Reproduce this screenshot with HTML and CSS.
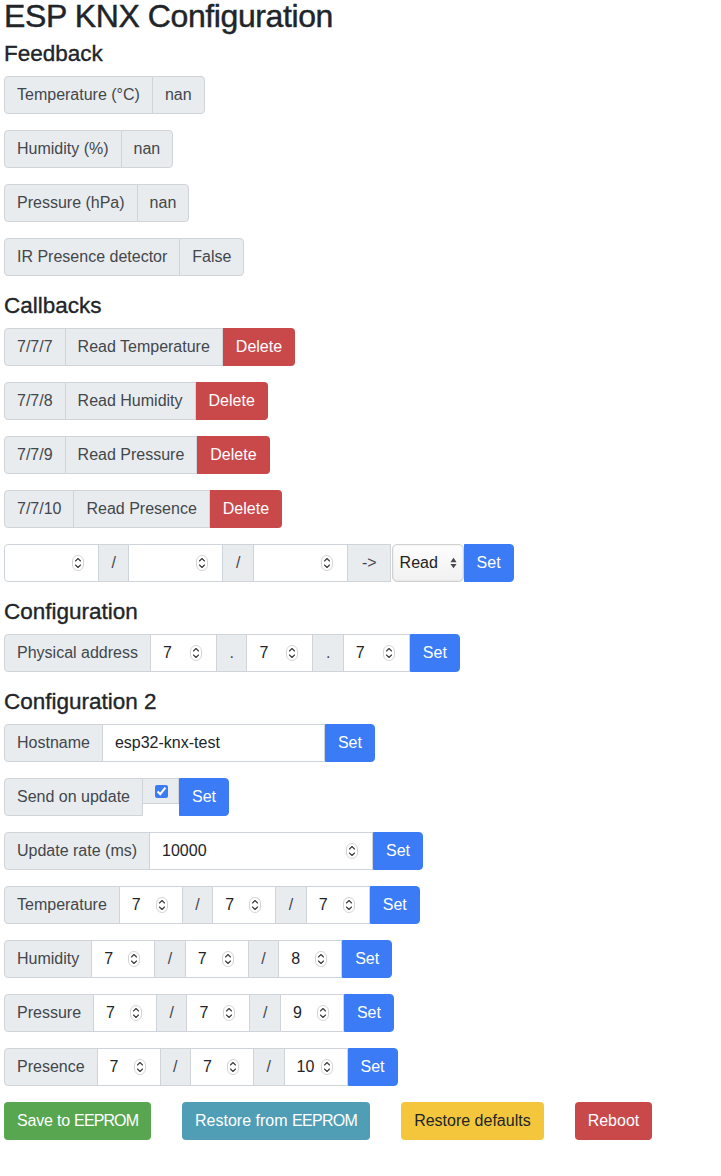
FILE: index.html
```html
<!DOCTYPE html>
<html lang="en">
<head>
<meta charset="utf-8">
<title>ESP KNX Configuration</title>
<link rel="stylesheet" href="styles.css">
</head>
<body>
<h1 class="title">ESP KNX Configuration</h1>

<h2 class="sec">Feedback</h2>
<div class="ig"><span class="t">Temperature (°C)</span><span class="t">nan</span></div>
<div class="ig"><span class="t">Humidity (%)</span><span class="t">nan</span></div>
<div class="ig"><span class="t">Pressure (hPa)</span><span class="t">nan</span></div>
<div class="ig"><span class="t">IR Presence detector</span><span class="t">False</span></div>

<h2 class="sec">Callbacks</h2>
<div class="ig"><span class="t">7/7/7</span><span class="t">Read Temperature</span><button class="btn red">Delete</button></div>
<div class="ig"><span class="t">7/7/8</span><span class="t">Read Humidity</span><button class="btn red">Delete</button></div>
<div class="ig"><span class="t">7/7/9</span><span class="t">Read Pressure</span><button class="btn red">Delete</button></div>
<div class="ig"><span class="t">7/7/10</span><span class="t">Read Presence</span><button class="btn red">Delete</button></div>
<div class="ig">
  <span class="num w95"><input type="text" value=""><svg class="spin" viewBox="0 0 12 16"><rect x="0.5" y="0.5" width="11" height="15" rx="5.5"/><path d="M3.5 6 L6 3.5 L8.5 6 M3.5 10 L6 12.5 L8.5 10"/></svg></span>
  <span class="t sl">/</span>
  <span class="num w95"><input type="text" value=""><svg class="spin" viewBox="0 0 12 16"><rect x="0.5" y="0.5" width="11" height="15" rx="5.5"/><path d="M3.5 6 L6 3.5 L8.5 6 M3.5 10 L6 12.5 L8.5 10"/></svg></span>
  <span class="t sl">/</span>
  <span class="num w95"><input type="text" value=""><svg class="spin" viewBox="0 0 12 16"><rect x="0.5" y="0.5" width="11" height="15" rx="5.5"/><path d="M3.5 6 L6 3.5 L8.5 6 M3.5 10 L6 12.5 L8.5 10"/></svg></span>
  <span class="t arrow">-&gt;</span>
  <span class="sel">Read<svg class="arr" viewBox="0 0 8 14"><path d="M4 1 L7.5 6 L0.5 6 Z M4 13 L7.5 8 L0.5 8 Z"/></svg></span>
  <button class="btn blue">Set</button>
</div>

<h2 class="sec">Configuration</h2>
<div class="ig">
  <span class="t">Physical address</span>
  <span class="num w67"><input type="text" value="7"><svg class="spin" viewBox="0 0 12 16"><rect x="0.5" y="0.5" width="11" height="15" rx="5.5"/><path d="M3.5 6 L6 3.5 L8.5 6 M3.5 10 L6 12.5 L8.5 10"/></svg></span>
  <span class="t sl">.</span>
  <span class="num w67"><input type="text" value="7"><svg class="spin" viewBox="0 0 12 16"><rect x="0.5" y="0.5" width="11" height="15" rx="5.5"/><path d="M3.5 6 L6 3.5 L8.5 6 M3.5 10 L6 12.5 L8.5 10"/></svg></span>
  <span class="t sl">.</span>
  <span class="num w67"><input type="text" value="7"><svg class="spin" viewBox="0 0 12 16"><rect x="0.5" y="0.5" width="11" height="15" rx="5.5"/><path d="M3.5 6 L6 3.5 L8.5 6 M3.5 10 L6 12.5 L8.5 10"/></svg></span>
  <button class="btn blue">Set</button>
</div>

<h2 class="sec">Configuration 2</h2>
<div class="ig">
  <span class="t">Hostname</span>
  <span class="num w223"><input type="text" value="esp32-knx-test"></span>
  <button class="btn blue">Set</button>
</div>
<div class="ig">
  <span class="t">Send on update</span>
  <span class="chk"><input type="checkbox" checked></span>
  <button class="btn blue">Set</button>
</div>
<div class="ig">
  <span class="t">Update rate (ms)</span>
  <span class="num w224"><input type="text" value="10000"><svg class="spin" viewBox="0 0 12 16"><rect x="0.5" y="0.5" width="11" height="15" rx="5.5"/><path d="M3.5 6 L6 3.5 L8.5 6 M3.5 10 L6 12.5 L8.5 10"/></svg></span>
  <button class="btn blue">Set</button>
</div>
<div class="ig">
  <span class="t">Temperature</span>
  <span class="num w64"><input type="text" value="7"><svg class="spin" viewBox="0 0 12 16"><rect x="0.5" y="0.5" width="11" height="15" rx="5.5"/><path d="M3.5 6 L6 3.5 L8.5 6 M3.5 10 L6 12.5 L8.5 10"/></svg></span>
  <span class="t sl">/</span>
  <span class="num w64"><input type="text" value="7"><svg class="spin" viewBox="0 0 12 16"><rect x="0.5" y="0.5" width="11" height="15" rx="5.5"/><path d="M3.5 6 L6 3.5 L8.5 6 M3.5 10 L6 12.5 L8.5 10"/></svg></span>
  <span class="t sl">/</span>
  <span class="num w64"><input type="text" value="7"><svg class="spin" viewBox="0 0 12 16"><rect x="0.5" y="0.5" width="11" height="15" rx="5.5"/><path d="M3.5 6 L6 3.5 L8.5 6 M3.5 10 L6 12.5 L8.5 10"/></svg></span>
  <button class="btn blue">Set</button>
</div>
<div class="ig">
  <span class="t">Humidity</span>
  <span class="num w64"><input type="text" value="7"><svg class="spin" viewBox="0 0 12 16"><rect x="0.5" y="0.5" width="11" height="15" rx="5.5"/><path d="M3.5 6 L6 3.5 L8.5 6 M3.5 10 L6 12.5 L8.5 10"/></svg></span>
  <span class="t sl">/</span>
  <span class="num w64"><input type="text" value="7"><svg class="spin" viewBox="0 0 12 16"><rect x="0.5" y="0.5" width="11" height="15" rx="5.5"/><path d="M3.5 6 L6 3.5 L8.5 6 M3.5 10 L6 12.5 L8.5 10"/></svg></span>
  <span class="t sl">/</span>
  <span class="num w64"><input type="text" value="8"><svg class="spin" viewBox="0 0 12 16"><rect x="0.5" y="0.5" width="11" height="15" rx="5.5"/><path d="M3.5 6 L6 3.5 L8.5 6 M3.5 10 L6 12.5 L8.5 10"/></svg></span>
  <button class="btn blue">Set</button>
</div>
<div class="ig">
  <span class="t">Pressure</span>
  <span class="num w64"><input type="text" value="7"><svg class="spin" viewBox="0 0 12 16"><rect x="0.5" y="0.5" width="11" height="15" rx="5.5"/><path d="M3.5 6 L6 3.5 L8.5 6 M3.5 10 L6 12.5 L8.5 10"/></svg></span>
  <span class="t sl">/</span>
  <span class="num w64"><input type="text" value="7"><svg class="spin" viewBox="0 0 12 16"><rect x="0.5" y="0.5" width="11" height="15" rx="5.5"/><path d="M3.5 6 L6 3.5 L8.5 6 M3.5 10 L6 12.5 L8.5 10"/></svg></span>
  <span class="t sl">/</span>
  <span class="num w64"><input type="text" value="9"><svg class="spin" viewBox="0 0 12 16"><rect x="0.5" y="0.5" width="11" height="15" rx="5.5"/><path d="M3.5 6 L6 3.5 L8.5 6 M3.5 10 L6 12.5 L8.5 10"/></svg></span>
  <button class="btn blue">Set</button>
</div>
<div class="ig">
  <span class="t">Presence</span>
  <span class="num w64"><input type="text" value="7"><svg class="spin" viewBox="0 0 12 16"><rect x="0.5" y="0.5" width="11" height="15" rx="5.5"/><path d="M3.5 6 L6 3.5 L8.5 6 M3.5 10 L6 12.5 L8.5 10"/></svg></span>
  <span class="t sl">/</span>
  <span class="num w64"><input type="text" value="7"><svg class="spin" viewBox="0 0 12 16"><rect x="0.5" y="0.5" width="11" height="15" rx="5.5"/><path d="M3.5 6 L6 3.5 L8.5 6 M3.5 10 L6 12.5 L8.5 10"/></svg></span>
  <span class="t sl">/</span>
  <span class="num w64"><input type="text" value="10"><svg class="spin" viewBox="0 0 12 16"><rect x="0.5" y="0.5" width="11" height="15" rx="5.5"/><path d="M3.5 6 L6 3.5 L8.5 6 M3.5 10 L6 12.5 L8.5 10"/></svg></span>
  <button class="btn blue">Set</button>
</div>

<div class="actions">
  <button class="abtn green">Save to <span class="caps">EEPROM</span></button>
  <button class="abtn teal">Restore from <span class="caps">EEPROM</span></button>
  <button class="abtn yellow">Restore defaults</button>
  <button class="abtn red">Reboot</button>
</div>
</body>
</html>
```

FILE: styles.css
```css
html, body {
  margin: 0;
  padding: 0;
  background: #ffffff;
}
body {
  padding: 0 4px;
  font-family: "Liberation Sans", Arial, sans-serif;
  font-size: 16px;
  line-height: 24px;
  color: #212529;
}
.title {
  margin: 0 0 8px 0;
  font-size: 32px;
  line-height: 32px;
  font-weight: 400;
  letter-spacing: -0.4px;
  -webkit-text-stroke: 0.45px #212529;
  white-space: nowrap;
}
.sec {
  margin: 0 0 8px 0;
  font-size: 22.5px;
  line-height: 28px;
  font-weight: 400;
  -webkit-text-stroke: 0.35px #212529;
}
.ig {
  display: flex;
  width: max-content;
  height: 38px;
  margin-bottom: 16px;
}
.ig > * + * {
  margin-left: -1px;
}
.ig > :first-child {
  border-top-left-radius: 4px;
  border-bottom-left-radius: 4px;
}
.ig > :last-child {
  border-top-right-radius: 4px;
  border-bottom-right-radius: 4px;
}
.t {
  display: flex;
  align-items: center;
  box-sizing: border-box;
  padding: 0 12px;
  border: 1px solid #ced4da;
  background: #e9ecef;
  color: #42474c;
  white-space: nowrap;
}
.t.sl {
  padding: 0 12.5px;
}
.t.arrow {
  padding: 0 13px 0 14px;
}
.num {
  display: flex;
  align-items: center;
  box-sizing: border-box;
  padding: 0 14px 0 12px;
  border: 1px solid #ced4da;
  background: #ffffff;
}
.num input {
  flex: 1 1 auto;
  min-width: 0;
  width: 10px;
  border: 0;
  padding: 0;
  margin: 0;
  outline: none;
  background: transparent;
  font: inherit;
  color: #212529;
}
.w95 { width: 95px; }
.w67 { width: 67px; }
.w64 { width: 64px; }
.w223 { width: 223px; }
.w224 { width: 224px; }
.spin {
  flex: 0 0 auto;
  width: 12px;
  height: 16px;
}
.spin rect {
  fill: #ffffff;
  stroke: #d4d4d4;
  stroke-width: 1;
}
.spin path {
  fill: none;
  stroke: #3a3a3a;
  stroke-width: 1.1;
  stroke-linecap: round;
  stroke-linejoin: round;
}
.sel {
  display: flex;
  align-items: center;
  justify-content: space-between;
  box-sizing: border-box;
  width: 72px;
  margin-left: 1px !important;
  padding: 0 6px 0 7px;
  border: 1px solid #d0d0d0;
  border-radius: 5px;
  background: linear-gradient(#fdfdfd, #f1f1f1);
  box-shadow: inset 0 0 2px rgba(0, 0, 0, 0.12);
  color: #222;
}
.arr {
  width: 7px;
  height: 14px;
}
.arr path {
  fill: #4a4a4a;
}
.chk {
  display: block;
  align-self: flex-start;
  box-sizing: border-box;
  width: 37px;
  height: 26px;
  padding: 6px 11px 0 12px;
  border: 1px solid #ced4da;
  background: #e9ecef;
  line-height: 0;
}
.chk input {
  margin: 0;
  width: 13px;
  height: 13px;
  accent-color: #3b7cf6;
}
.btn {
  display: flex;
  align-items: center;
  box-sizing: border-box;
  padding: 0 12px;
  margin: 0;
  border: 1px solid transparent;
  font: inherit;
  color: #ffffff;
  cursor: pointer;
  border-radius: 0;
}
.btn.red { background: #c9494b; }
.btn.blue { background: #3b7cf6; border-color: #3b7cf6; }
.actions {
  display: flex;
  gap: 31px;
}
.abtn {
  box-sizing: border-box;
  height: 38px;
  padding: 0 12px;
  margin: 0;
  border: 1px solid transparent;
  border-radius: 4px;
  font: inherit;
  color: #ffffff;
  cursor: pointer;
}
.caps {
  letter-spacing: -0.7px;
}
.abtn.green { letter-spacing: -0.2px; }
.abtn.green .caps { letter-spacing: -0.9px; }
.abtn.green { background: #58a64f; }
.abtn.teal { background: #509eb6; }
.abtn.yellow { background: #f4c63b; color: #212529; }
.abtn.red { background: #c9494b; }
```
